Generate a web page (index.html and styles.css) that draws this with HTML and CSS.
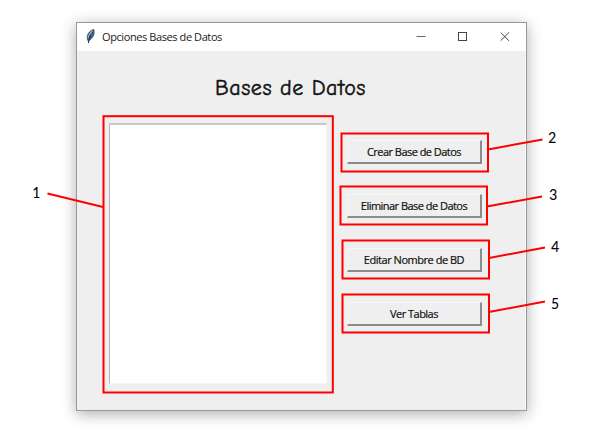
FILE: index.html
```html
<!DOCTYPE html>
<html lang="es">
<head>
<meta charset="utf-8">
<title>Opciones Bases de Datos</title>
<link rel="stylesheet" href="styles.css">
</head>
<body>
<main class="window">
  <header class="titlebar">
    <svg class="feather" width="10" height="15" viewBox="0 0 10 15">
      <path d="M1.8 11.5C0 6.5 3 1.5 7.8 .5C9 5 7 9 3 11.5Z" fill="#31639c" stroke="#3c4248" stroke-width=".8"/>
      <path d="M6.6 1.6Q2.6 5 2.2 9.5" fill="none" stroke="#a9b4bf" stroke-width="1.1"/>
      <path d="M4.5 6.5Q3 9 2.4 14" fill="none" stroke="#24282d" stroke-width="1.1"/>
    </svg>
    <span class="caption">Opciones Bases de Datos</span>
    <svg class="controls" width="96" height="12" viewBox="0 0 96 12" fill="none" stroke="#444">
      <path d="M.5 5.5H9.5" stroke="#666"/>
      <rect x="42.5" y="1.5" width="8" height="8"/>
      <path d="M84.7 1.5L92.9 9.7M92.9 1.5L84.7 9.7"/>
    </svg>
  </header>
  <h1 class="heading">Bases de Datos</h1>
  <div class="content">
    <div class="listbox"></div>
    <div class="actions">
      <button class="action">Crear Base de Datos</button>
      <button class="action">Eliminar Base de Datos</button>
      <button class="action action-loose">Editar Nombre de BD</button>
      <button class="action">Ver Tablas</button>
    </div>
  </div>
</main>
<svg class="callouts" width="601" height="432" viewBox="0 0 601 432">
  <g class="marks">
    <rect x="103.5" y="116.2" width="229.3" height="276.3"/>
    <rect x="341.5" y="133.5" width="146.5" height="38"/>
    <rect x="340.5" y="186.5" width="146.5" height="38"/>
    <rect x="342.5" y="240.5" width="146.5" height="38"/>
    <rect x="342.5" y="294.5" width="146.5" height="38"/>
    <path d="M47.5 193.5L103 207M488 149.5L542.5 139.5M487 206.5L542 196.5M489 258L545 247.5M489 312L545 301.5"/>
  </g>
  <g class="numbers">
    <text x="32" y="198">1</text>
    <text x="548" y="143">2</text>
    <text x="549" y="200">3</text>
    <text x="551" y="252">4</text>
    <text x="551" y="309">5</text>
  </g>
</svg>
</body>
</html>
```
FILE: styles.css
```css
* { box-sizing: border-box; }
body {
  margin: 0;
  height: 432px;
  padding: 22px 0 0 76px;
  overflow: hidden;
  background: #fff;
  font-family: "Segoe UI", "Open Sans", sans-serif;
}
.window {
  width: 451px;
  height: 389px;
  border: 1px solid #999;
  background: #efefef;
  box-shadow: inset -1px 0 #fafafa, 0 3px 14px rgba(0, 0, 0, .32);
}
.titlebar {
  display: flex;
  align-items: center;
  height: 28px;
  padding: 0 14px 0 9px;
  background: #fff;
}
.feather { margin-top: -2px; }
.caption {
  margin: -1px 0 0 6px;
  color: #222;
  font-size: 11px;
  letter-spacing: -.41px;
  white-space: nowrap;
}
.controls { margin-left: auto; }
.heading {
  margin: 23px 0 0;
  padding-right: 22px;
  height: 28px;
  text-align: center;
  color: #111;
  font: 400 22px/28px "Comic Sans MS", "Comic Neue", Lato, sans-serif;
  letter-spacing: .55px;
  -webkit-text-stroke: .5px #111;
}
.content {
  display: flex;
  gap: 20px;
  padding: 21px 0 0 32px;
}
.listbox {
  width: 218px;
  height: 261px;
  background: #fff;
  border: 1px solid #f5f5f5;
  border-top: 2px solid #c8c8c8;
  border-left: 1px solid #b4b4b4;
}
.actions {
  display: flex;
  flex-direction: column;
  gap: 30px;
  padding-top: 17px;
}
.action {
  width: 135px;
  height: 24px;
  padding: 0;
  border: solid;
  border-width: 1px 2px 2px 1px;
  border-color: #f7f7f7 #8c8c8c #8c8c8c #f7f7f7;
  background: #efefef;
  color: #111;
  font: 11px/20px "Segoe UI", "Open Sans", sans-serif;
  letter-spacing: -.53px;
  -webkit-text-stroke: .2px #111;
  white-space: nowrap;
}
.action-loose { letter-spacing: -.47px; }
.callouts { position: absolute; left: 0; top: 0; pointer-events: none; }
.marks { fill: none; stroke: #ff0000; stroke-width: 2; }
.numbers { fill: #000; font: 16px Calibri, Lato, sans-serif; }
```
